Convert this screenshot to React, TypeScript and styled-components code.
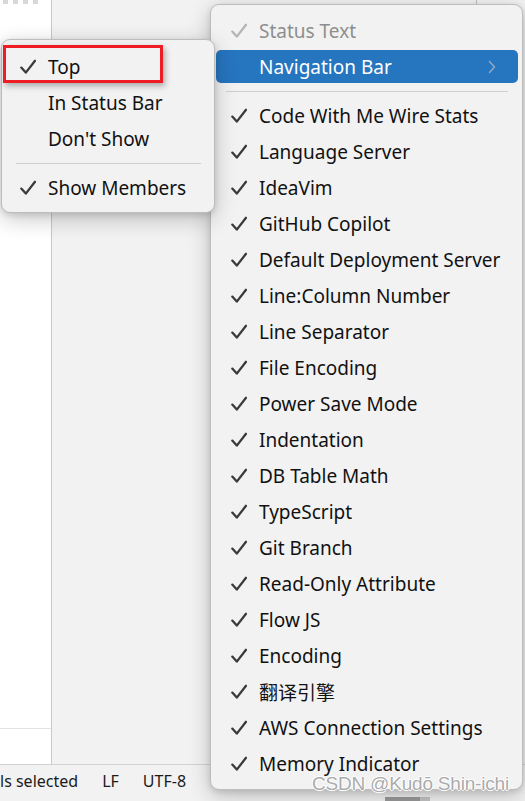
import React from 'react';
import styled, { createGlobalStyle } from 'styled-components';

const GlobalStyle = createGlobalStyle`
	html, body {
		margin: 0;
		padding: 0;
		background: #f2f2f2;
	}
	body {
		font-family: "Noto Sans", "Noto Sans CJK SC", sans-serif;
	}
`;

const Page = styled.div`
	position: relative;
	width: 525px;
	height: 801px;
	overflow: hidden;
	display: grid;
	grid-template-rows: 1fr 37px;
	background: #f2f2f2;
`;

const Workspace = styled.div`
	display: flex;
	min-height: 0;
`;

const EditorStrip = styled.div`
	width: 51px;
	background: #ffffff;
	border-right: 1px solid #c9c9c9;
	display: flex;
	flex-direction: column;
	justify-content: space-between;
`;

const TabDashes = styled.div`
	display: flex;
	gap: 5px;
	padding-left: 3px;
	height: 4px;
	span {
		width: 5px;
		background: #d8d8d8;
	}
`;

const EditorFooter = styled.div`
	height: 35px;
	border-top: 1px solid #e2e2e2;
`;

const SidePanel = styled.div`
	flex: 1;
	display: flex;
	justify-content: flex-end;
	padding-right: 48px;
`;

const PanelTick = styled.div`
	width: 1px;
	height: 4px;
	background: #bdbdbd;
`;

const StatusBar = styled.div`
	border-top: 1px solid #d2d2d2;
	display: flex;
	align-items: center;
	gap: 24px;
	padding-bottom: 4px;
	font-size: 16px;
	color: #1b1b1b;
	position: relative;
`;

const ScrollThumb = styled.div`
	position: absolute;
	left: 385px;
	bottom: 0;
	width: 45px;
	height: 4px;
	background: linear-gradient(90deg, #9a9a9a 0 78%, #c4c4c4 78% 100%);
`;

const PopupMenu = styled.div<{ $left: number; $top: number; $width: number; $padTop: number; $padBottom: number }>`
	position: absolute;
	left: ${p => p.$left}px;
	top: ${p => p.$top}px;
	width: ${p => p.$width}px;
	box-sizing: border-box;
	padding: ${p => p.$padTop}px 4px ${p => p.$padBottom}px 5px;
	background: #f2f2f2;
	border: 1px solid #bdbdbd;
	border-radius: 9px;
	box-shadow: 0 6px 22px rgba(0, 0, 0, 0.22), 0 2px 6px rgba(0, 0, 0, 0.12);
	display: flex;
	flex-direction: column;
`;

const MenuItem = styled.div<{ $active?: boolean; $disabled?: boolean; $inset: number }>`
	display: grid;
	grid-template-columns: 16px 1fr 30px;
	column-gap: 12px;
	align-items: center;
	padding-left: ${p => p.$inset}px;
	font-size: 19px;
	white-space: nowrap;
	border-radius: 5px;
	color: ${p => (p.$active ? '#ffffff' : p.$disabled ? '#8e8e8e' : '#111111')};
	background: ${p => (p.$active ? '#2675bf' : 'transparent')};
	margin: ${p => (p.$active ? '1px 0 2px' : '0')};
	height: ${p => (p.$active ? '33px' : '36px')};
`;

const CheckSlot = styled.span`
	grid-column: 1;
	display: flex;
	align-items: center;
`;

const Label = styled.span`
	grid-column: 2;
`;

const Arrow = styled.span`
	grid-column: 3;
	display: flex;
	align-items: center;
`;

const Separator = styled.div<{ $inset: number }>`
	height: 13px;
	display: flex;
	align-items: center;
	padding: 0 ${p => p.$inset}px;
	&::after {
		content: '';
		flex: 1;
		height: 1px;
		background: #cfcfcf;
	}
`;

const Callout = styled.div`
	position: absolute;
	left: 3px;
	top: 45px;
	width: 160px;
	height: 38px;
	box-sizing: border-box;
	border: 3px solid #ee1c25;
	box-shadow: 2px 3px 6px rgba(0, 0, 0, 0.3);
`;

const Watermark = styled.div`
	position: absolute;
	left: 312px;
	top: 773px;
	font-family: "Liberation Sans", Arial, sans-serif;
	font-size: 19px;
	letter-spacing: -0.2px;
	color: rgba(160, 160, 160, 0.9);
	text-shadow: -1px 0 0 #fff, 1px 0 0 #fff, 0 -1px 0 #fff, 0 1px 0 #fff;
	white-space: nowrap;
`;

const Check = ({ color = '#3a3a3a' }: { color?: string }) => (
	<svg width="16" height="16" viewBox="0 0 16 16">
		<path d="M1.3 8.6 L5.8 13.6 L15 1.8" fill="none" stroke={color} strokeWidth="2.3" strokeLinecap="round" strokeLinejoin="round" />
	</svg>
);

const Chevron = () => (
	<svg width="8" height="14" viewBox="0 0 8 14">
		<path d="M1.5 1.5 L6.5 7 L1.5 12.5" fill="none" stroke="#8fa9c4" strokeWidth="1.5" strokeLinecap="round" strokeLinejoin="round" />
	</svg>
);

const widgets = [
	'Code With Me Wire Stats',
	'Language Server',
	'IdeaVim',
	'GitHub Copilot',
	'Default Deployment Server',
	'Line:Column Number',
	'Line Separator',
	'File Encoding',
	'Power Save Mode',
	'Indentation',
	'DB Table Math',
	'TypeScript',
	'Git Branch',
	'Read-Only Attribute',
	'Flow JS',
	'Encoding',
	'翻译引擎',
	'AWS Connection Settings',
	'Memory Indicator',
];

export default function App() {
	return (
		<>
			<GlobalStyle />
			<Page>
				<Workspace>
					<EditorStrip>
						<TabDashes>
							<span /><span /><span /><span />
						</TabDashes>
						<EditorFooter />
					</EditorStrip>
					<SidePanel>
						<PanelTick />
					</SidePanel>
				</Workspace>
				<StatusBar>
					<span>ls selected</span>
					<span>LF</span>
					<span>UTF-8</span>
					<ScrollThumb />
				</StatusBar>

				<PopupMenu $left={210} $top={4} $width={313} $padTop={8} $padBottom={7}>
					<MenuItem $disabled $inset={15}>
						<CheckSlot><Check color="#b4b4b4" /></CheckSlot>
						<Label>Status Text</Label>
					</MenuItem>
					<MenuItem $active $inset={15}>
						<Label>Navigation Bar</Label>
						<Arrow><Chevron /></Arrow>
					</MenuItem>
					<Separator $inset={10} />
					{widgets.map(name => (
						<MenuItem key={name} $inset={15}>
							<CheckSlot><Check /></CheckSlot>
							<Label>{name}</Label>
						</MenuItem>
					))}
				</PopupMenu>

				<PopupMenu $left={1} $top={39} $width={214} $padTop={9} $padBottom={6}>
					<MenuItem $inset={13}>
						<CheckSlot><Check /></CheckSlot>
						<Label>Top</Label>
					</MenuItem>
					<MenuItem $inset={13}>
						<Label>In Status Bar</Label>
					</MenuItem>
					<MenuItem $inset={13}>
						<Label>Don't Show</Label>
					</MenuItem>
					<Separator $inset={9} />
					<MenuItem $inset={13}>
						<CheckSlot><Check /></CheckSlot>
						<Label>Show Members</Label>
					</MenuItem>
				</PopupMenu>

				<Callout />
				<Watermark>CSDN @Kudō Shin-ichi</Watermark>
			</Page>
		</>
	);
}
